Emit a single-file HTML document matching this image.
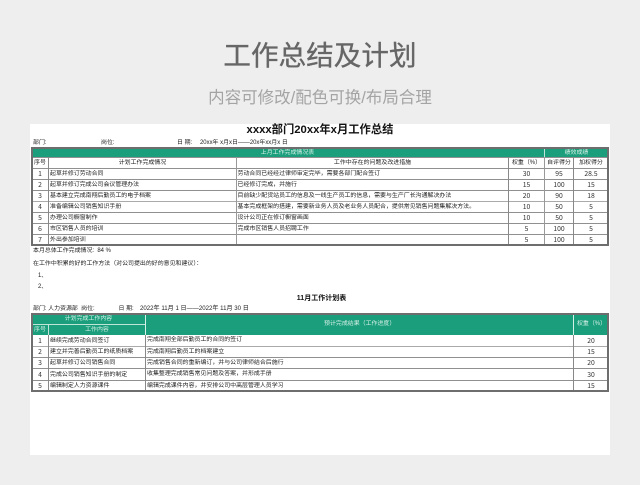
<!DOCTYPE html>
<html><head><meta charset="utf-8">
<style>
html,body{margin:0;padding:0;width:640px;height:485px;overflow:hidden;background:#eee;font-family:"Liberation Sans","Noto Sans CJK SC",sans-serif}
#p{position:absolute;left:30px;top:124px;width:580px;height:331px;background:#fff}
#b{position:absolute;left:0;top:0;width:640px;height:485px;filter:blur(.3px)}
.t{position:absolute;white-space:nowrap;font-size:5.95px;line-height:10px;height:10px;color:#222}
.c{text-align:center}
.n{font-family:"Noto Sans CJK SC","Liberation Sans",sans-serif;font-size:6.8px;margin-top:-1px;color:#333}
.w{color:#d5f0e6}
.g{position:absolute;background:#1a9e7c}
.h{position:absolute;height:1px;background:#909090}
.v{position:absolute;width:1px;background:#888}
.o{position:absolute;box-sizing:border-box;border:2px solid #6e6e6e}
</style></head><body>
<div class="t c" style="left:0;width:640px;top:36px;height:40px;line-height:40px;font-size:27.5px;letter-spacing:.1px;color:#666;-webkit-text-stroke:.35px #666">工作总结及计划</div>
<div class="t c" style="left:0;width:640px;top:86px;height:24px;line-height:24px;font-size:16.5px;color:#a4a4a4">内容可修改/配色可换/布局合理</div>
<div id="p"></div>
<div id="b">
<div class="t c" style="left:0;width:640px;top:123px;height:14px;line-height:14px;font-size:11.3px;font-weight:bold;color:#111">xxxx部门20xx年x月工作总结</div>
<div class="t" style="left:33px;top:138px">部门:</div>
<div class="t" style="left:101px;top:138px">岗位:</div>
<div class="t" style="left:177px;top:138px">日 期:</div>
<div class="t" style="left:200px;top:138px">20xx年 x月x日——20x年xx月x 日</div>

<div class="g" style="left:31px;top:147px;width:578px;height:10.5px"></div>
<div class="t c w" style="left:31px;width:513px;top:147.5px">上月工作完成情况表</div>
<div class="t c w" style="left:544px;width:65px;top:147.5px">绩效成绩</div>
<div class="v" style="left:544px;top:148px;height:9px;background:#bfe5d8"></div>

<div class="h" style="left:31px;width:578px;top:157px"></div>
<div class="h" style="left:31px;width:578px;top:168px"></div>
<div class="h" style="left:31px;width:578px;top:179px"></div>
<div class="h" style="left:31px;width:578px;top:190px"></div>
<div class="h" style="left:31px;width:578px;top:201px;background:#aaa"></div>
<div class="h" style="left:31px;width:578px;top:212px"></div>
<div class="h" style="left:31px;width:578px;top:223px"></div>
<div class="h" style="left:31px;width:578px;top:234px"></div>
<div class="v" style="left:48px;top:157px;height:88px"></div>
<div class="v" style="left:236px;top:157px;height:88px;background:#999"></div>
<div class="v" style="left:508px;top:157px;height:88px"></div>
<div class="v" style="left:544px;top:157px;height:88px;background:#999"></div>
<div class="v" style="left:573px;top:157px;height:88px"></div>
<div class="o" style="left:31px;top:147px;width:578px;height:98.5px"></div>

<div class="t c" style="left:32px;width:16px;top:158px">序号</div>
<div class="t c" style="left:49px;width:187px;top:158px">计划工作完成情况</div>
<div class="t c" style="left:237px;width:271px;top:158px">工作中存在的问题及改进措施</div>
<div class="t c" style="left:509px;width:35px;top:158px">权重（%）</div>
<div class="t c" style="left:545px;width:28px;top:158px">自评得分</div>
<div class="t c" style="left:574px;width:34px;top:158px">加权得分</div>

<div class="t c n" style="left:32px;width:16px;top:169px">1</div><div class="t" style="left:50px;top:169px">起草并修订劳动合同</div><div class="t" style="left:237.5px;top:169px">劳动合同已经经过律师审定完毕，需要各部门配合签订</div><div class="t c n" style="left:509px;width:35px;top:169px">30</div><div class="t c n" style="left:545px;width:28px;top:169px">95</div><div class="t c n" style="left:574px;width:34px;top:169px">28.5</div>
<div class="t c n" style="left:32px;width:16px;top:180px">2</div><div class="t" style="left:50px;top:180px">起草并修订完成公司会议管理办法</div><div class="t" style="left:237.5px;top:180px">已经修订完成，并施行</div><div class="t c n" style="left:509px;width:35px;top:180px">15</div><div class="t c n" style="left:545px;width:28px;top:180px">100</div><div class="t c n" style="left:574px;width:34px;top:180px">15</div>
<div class="t c n" style="left:32px;width:16px;top:191px">3</div><div class="t" style="left:50px;top:191px">基本建立完成南翔后勤员工的电子档案</div><div class="t" style="left:237.5px;top:191px">目前缺少配货站员工的信息及一线生产员工的信息，需要与生产厂长沟通解决办法</div><div class="t c n" style="left:509px;width:35px;top:191px">20</div><div class="t c n" style="left:545px;width:28px;top:191px">90</div><div class="t c n" style="left:574px;width:34px;top:191px">18</div>
<div class="t c n" style="left:32px;width:16px;top:202px">4</div><div class="t" style="left:50px;top:202px">准备编辑公司销售知识手册</div><div class="t" style="left:237.5px;top:202px">基本完成框架的搭建，需要新业务人员及老业务人员配合，提供常见销售问题集解决方法。</div><div class="t c n" style="left:509px;width:35px;top:202px">10</div><div class="t c n" style="left:545px;width:28px;top:202px">50</div><div class="t c n" style="left:574px;width:34px;top:202px">5</div>
<div class="t c n" style="left:32px;width:16px;top:213px">5</div><div class="t" style="left:50px;top:213px">办理公司橱窗制作</div><div class="t" style="left:237.5px;top:213px">设计公司正在修订橱窗画面</div><div class="t c n" style="left:509px;width:35px;top:213px">10</div><div class="t c n" style="left:545px;width:28px;top:213px">50</div><div class="t c n" style="left:574px;width:34px;top:213px">5</div>
<div class="t c n" style="left:32px;width:16px;top:224px">6</div><div class="t" style="left:50px;top:224px">市区销售人员的培训</div><div class="t" style="left:237.5px;top:224px">完成市区销售人员招聘工作</div><div class="t c n" style="left:509px;width:35px;top:224px">5</div><div class="t c n" style="left:545px;width:28px;top:224px">100</div><div class="t c n" style="left:574px;width:34px;top:224px">5</div>
<div class="t c n" style="left:32px;width:16px;top:235px">7</div><div class="t" style="left:50px;top:235px">外出参加培训</div><div class="t c n" style="left:509px;width:35px;top:235px">5</div><div class="t c n" style="left:545px;width:28px;top:235px">100</div><div class="t c n" style="left:574px;width:34px;top:235px">5</div>

<div class="t" style="left:33px;top:246px">本月总体工作完成情况:&nbsp; 84 %</div>
<div class="t" style="left:33px;top:259px">在工作中积累的好的工作方法（对公司提出的好的意见和建议）：</div>
<div class="t" style="left:38px;top:271px">1、</div>
<div class="t" style="left:38px;top:282px">2、</div>

<div class="t c" style="left:0;width:643px;top:293.5px;font-size:7px;font-weight:bold;color:#111">11月工作计划表</div>
<div class="t" style="left:33px;top:304px">部门: 人力资源部&nbsp; 岗位:</div>
<div class="t" style="left:118.5px;top:304px">日 期:</div>
<div class="t" style="left:140px;top:304px;font-size:6.1px">2022年 11月 1 日——2022年 11月 30 日</div>

<div class="g" style="left:31px;top:313px;width:578px;height:22px"></div>
<div class="h" style="left:33px;width:112px;top:324px;background:#bfe5d8"></div>
<div class="v" style="left:48px;top:324px;height:11px;background:#bfe5d8"></div>
<div class="v" style="left:145px;top:314px;height:21px;background:#d5f0e6"></div>
<div class="v" style="left:573px;top:314px;height:21px;background:#d5f0e6"></div>
<div class="t c w" style="left:32px;width:113px;top:314px">计划完成工作内容</div>
<div class="t c w" style="left:32px;width:16px;top:325px">序号</div>
<div class="t c w" style="left:49px;width:96px;top:325px">工作内容</div>
<div class="t w" style="left:324px;top:319px">预计完成结果（工作进度）</div>
<div class="t c w" style="left:574px;width:35px;top:319px">权重（%）</div>

<div class="h" style="left:31px;width:578px;top:346px;background:#aaa"></div>
<div class="h" style="left:31px;width:578px;top:357px"></div>
<div class="h" style="left:31px;width:578px;top:368px"></div>
<div class="h" style="left:31px;width:578px;top:380px"></div>
<div class="v" style="left:48px;top:335px;height:57px"></div>
<div class="v" style="left:145px;top:335px;height:57px"></div>
<div class="v" style="left:573px;top:335px;height:57px"></div>
<div class="o" style="left:31px;top:313px;width:578px;height:79px"></div>

<div class="t c n" style="left:32px;width:16px;top:335.5px">1</div><div class="t" style="left:50px;top:335.5px">继续完成劳动合同签订</div><div class="t" style="left:147px;top:335px">完成南翔全部后勤员工的合同的签订</div><div class="t c n" style="left:574px;width:34px;top:335.5px">20</div>
<div class="t c n" style="left:32px;width:16px;top:347px">2</div><div class="t" style="left:50px;top:347px">建立并完善后勤员工的纸质档案</div><div class="t" style="left:147px;top:346.5px">完成南翔后勤员工的档案建立</div><div class="t c n" style="left:574px;width:34px;top:347px">15</div>
<div class="t c n" style="left:32px;width:16px;top:358px">3</div><div class="t" style="left:50px;top:358px">起草并修订公司销售合同</div><div class="t" style="left:147px;top:358px">完成销售合同的重新编订，并与公司律师结合后施行</div><div class="t c n" style="left:574px;width:34px;top:358px">20</div>
<div class="t c n" style="left:32px;width:16px;top:369.5px">4</div><div class="t" style="left:50px;top:369.5px">完成公司销售知识手册的制定</div><div class="t" style="left:147px;top:369px">收集整理完成销售常见问题及答案，并形成手册</div><div class="t c n" style="left:574px;width:34px;top:369.5px">30</div>
<div class="t c n" style="left:32px;width:16px;top:381px">5</div><div class="t" style="left:50px;top:381px">编辑制定人力资源课件</div><div class="t" style="left:147px;top:381px">编辑完成课件内容，并安排公司中高层管理人员学习</div><div class="t c n" style="left:574px;width:34px;top:381px">15</div>
</div>
</body></html>
